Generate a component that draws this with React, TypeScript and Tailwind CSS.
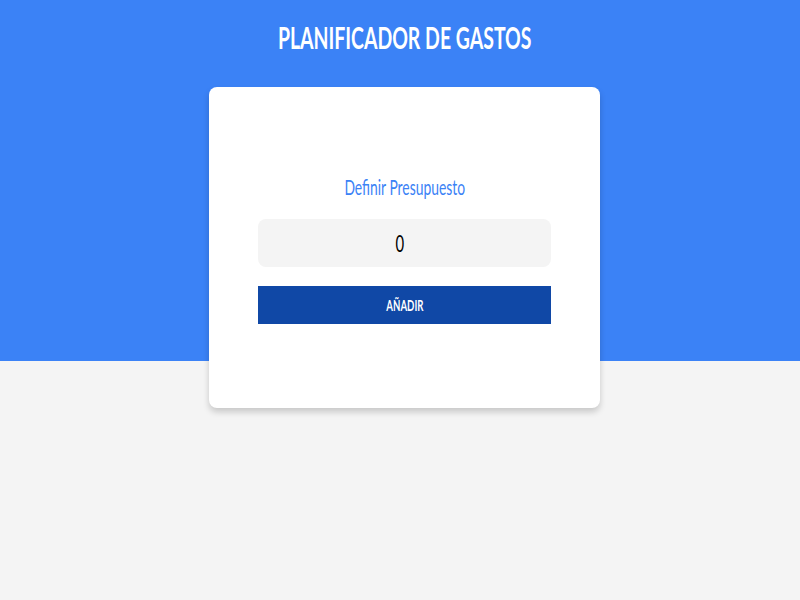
import { useState } from "react";

// the reference text is narrow, so Lato gets squeezed horizontally
const squeeze = "inline-block scale-x-[0.6]";

const App = () => {
  const [budget, setBudget] = useState("0");

  return (
    <div className="min-h-screen w-full bg-[linear-gradient(to_bottom,#3b82f6_361px,#f4f4f4_361px)] pl-[9px] font-['Lato','Liberation_Sans',sans-serif]">
      <header className="pt-[19px] text-center">
        <h1 className="text-[30px] font-bold leading-[36px] text-white">
          <span className="inline-block scale-x-[0.648] whitespace-nowrap">
            PLANIFICADOR DE GASTOS
          </span>
        </h1>
      </header>

      <main className="mx-auto mt-[32px] w-[391px] rounded-lg bg-white px-[49px] pt-[86px] pb-[84px] shadow-[0_4px_6px_rgba(0,0,0,0.18)]">
        <form
          className="flex flex-col"
          onSubmit={(e) => e.preventDefault()}
        >
          <label
            htmlFor="budget"
            className="text-center text-[22px] leading-[28px] text-[#3b82f6]"
          >
            <span className="inline-block scale-x-[0.63] whitespace-nowrap">
              Definir Presupuesto
            </span>
          </label>
          <div className="mt-[18px] flex h-[48px] items-center justify-center rounded-lg bg-[#f4f4f4]">
            <input
              id="budget"
              type="number"
              value={budget}
              onChange={(e) => setBudget(e.target.value)}
              className="w-full scale-x-[0.62] bg-transparent text-center text-[24px] text-black outline-none"
            />
          </div>
          <button
            type="submit"
            className="mt-[19px] h-[38px] bg-[#1048a6] text-[16px] font-bold text-white"
          >
            <span className={squeeze}>AÑADIR</span>
          </button>
        </form>
      </main>
    </div>
  );
};

export default App;
